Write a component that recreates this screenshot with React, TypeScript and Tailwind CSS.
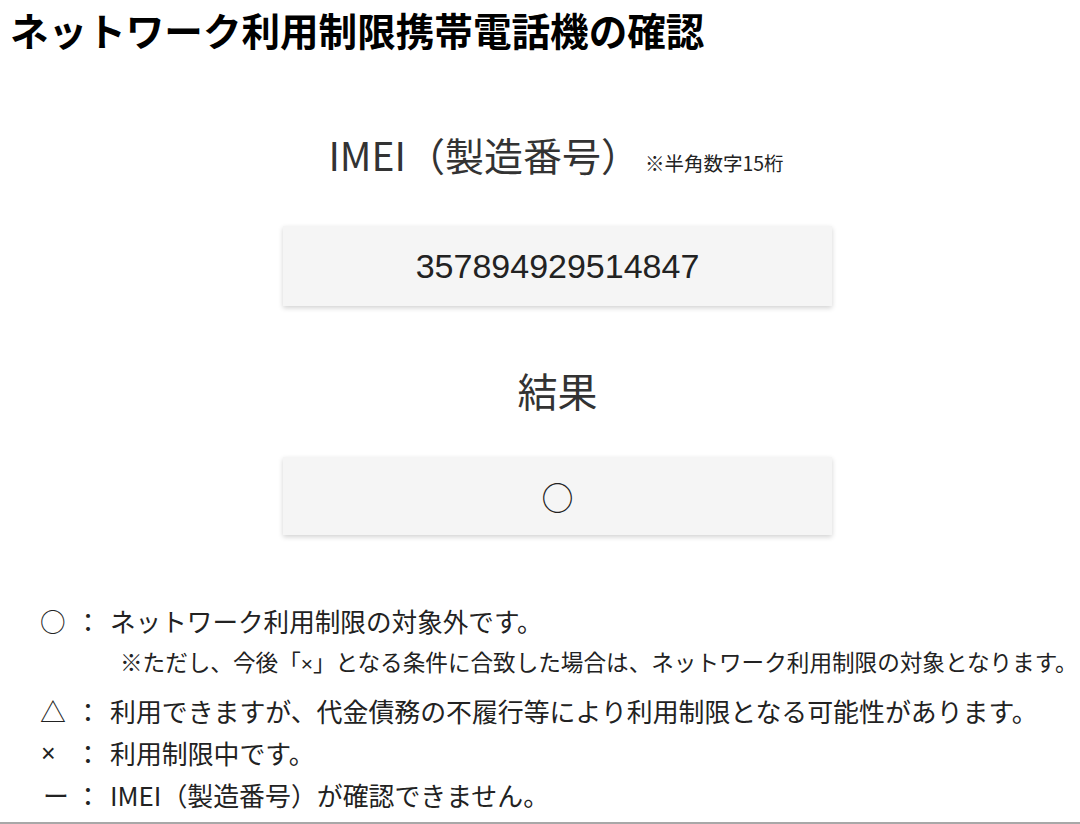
export default function App() {
  const font = { fontFamily: '"Noto Sans CJK JP", "Noto Sans", sans-serif' };
  const latin = { fontFamily: '"Liberation Sans", Arial, sans-serif' };

  const rows = [
    { mark: "△", cls: "", text: "利用できますが、代金債務の不履行等により利用制限となる可能性があります。" },
    { mark: "×", cls: "pl-[1px] text-[25px]", text: "利用制限中です。" },
    { mark: "ー", cls: "pl-[3px]", text: "IMEI（製造番号）が確認できません。" },
  ];

  return (
    <div className="w-[1080px] h-[824px] bg-white text-[#222] overflow-hidden" style={font}>
      {/* タイトル */}
      <h1 className="pt-[5px] pl-[10px] text-[38.6px] leading-[48px] font-bold text-black">
        ネットワーク利用制限携帯電話機の確認
      </h1>

      <div className="pl-[35px]">
        <div className="w-[549px] mx-auto flex flex-col items-center">
          <div className="mt-[75px] flex items-baseline text-[#333] pr-[3px]">
            <span className="text-[39px] leading-[52px]">IMEI（製造番号）</span>
            <span className="ml-[5px] text-[19.5px] text-[#222]">※半角数字15桁</span>
          </div>

          <div className="mt-[46px] w-full h-[80px] bg-[#f5f5f5] shadow-[0_2px_5px_rgba(0,0,0,0.18)] flex items-center justify-center">
            <span className="text-[34px] text-[#222]" style={latin}>
              357894929514847
            </span>
          </div>

          <div className="mt-[58px] text-[40px] leading-[52px] text-[#333]">結果</div>

          <div className="mt-[41px] w-full h-[78px] bg-[#f5f5f5] shadow-[0_2px_5px_rgba(0,0,0,0.18)] flex items-center justify-center">
            <span className="text-[32px] leading-none text-[#222]">○</span>
          </div>
        </div>
      </div>

      {/* 凡例 */}
      <div className="mt-[64px] pl-[40px] text-[#222]">
        <div className="flex text-[25.6px] leading-[44px]">
          <span className="w-[31px]">○</span>
          <span className="w-[34px] text-center">：</span>
          <span className="ml-[5px]">ネットワーク利用制限の対象外です。</span>
        </div>
        <div className="pl-[80px] text-[22.6px] leading-[38px]">
          ※ただし、今後「
          <span className="text-[21px]" style={latin}>×</span>
          」となる条件に合致した場合は、ネットワーク利用制限の対象となります。
        </div>
        <div className="mt-[7px]">
          {rows.map((r) => (
            <div key={r.mark} className="flex items-center text-[25.9px] leading-[42px]">
              <span className={"w-[31px] " + r.cls} style={r.mark === "×" ? latin : undefined}>
                {r.mark}
              </span>
              <span className="w-[34px] text-center">：</span>
              <span className="ml-[5px]">{r.text}</span>
            </div>
          ))}
        </div>
      </div>

      <div className="mt-[6px] h-[2px] bg-[#a8a8a8]" />
    </div>
  );
}
